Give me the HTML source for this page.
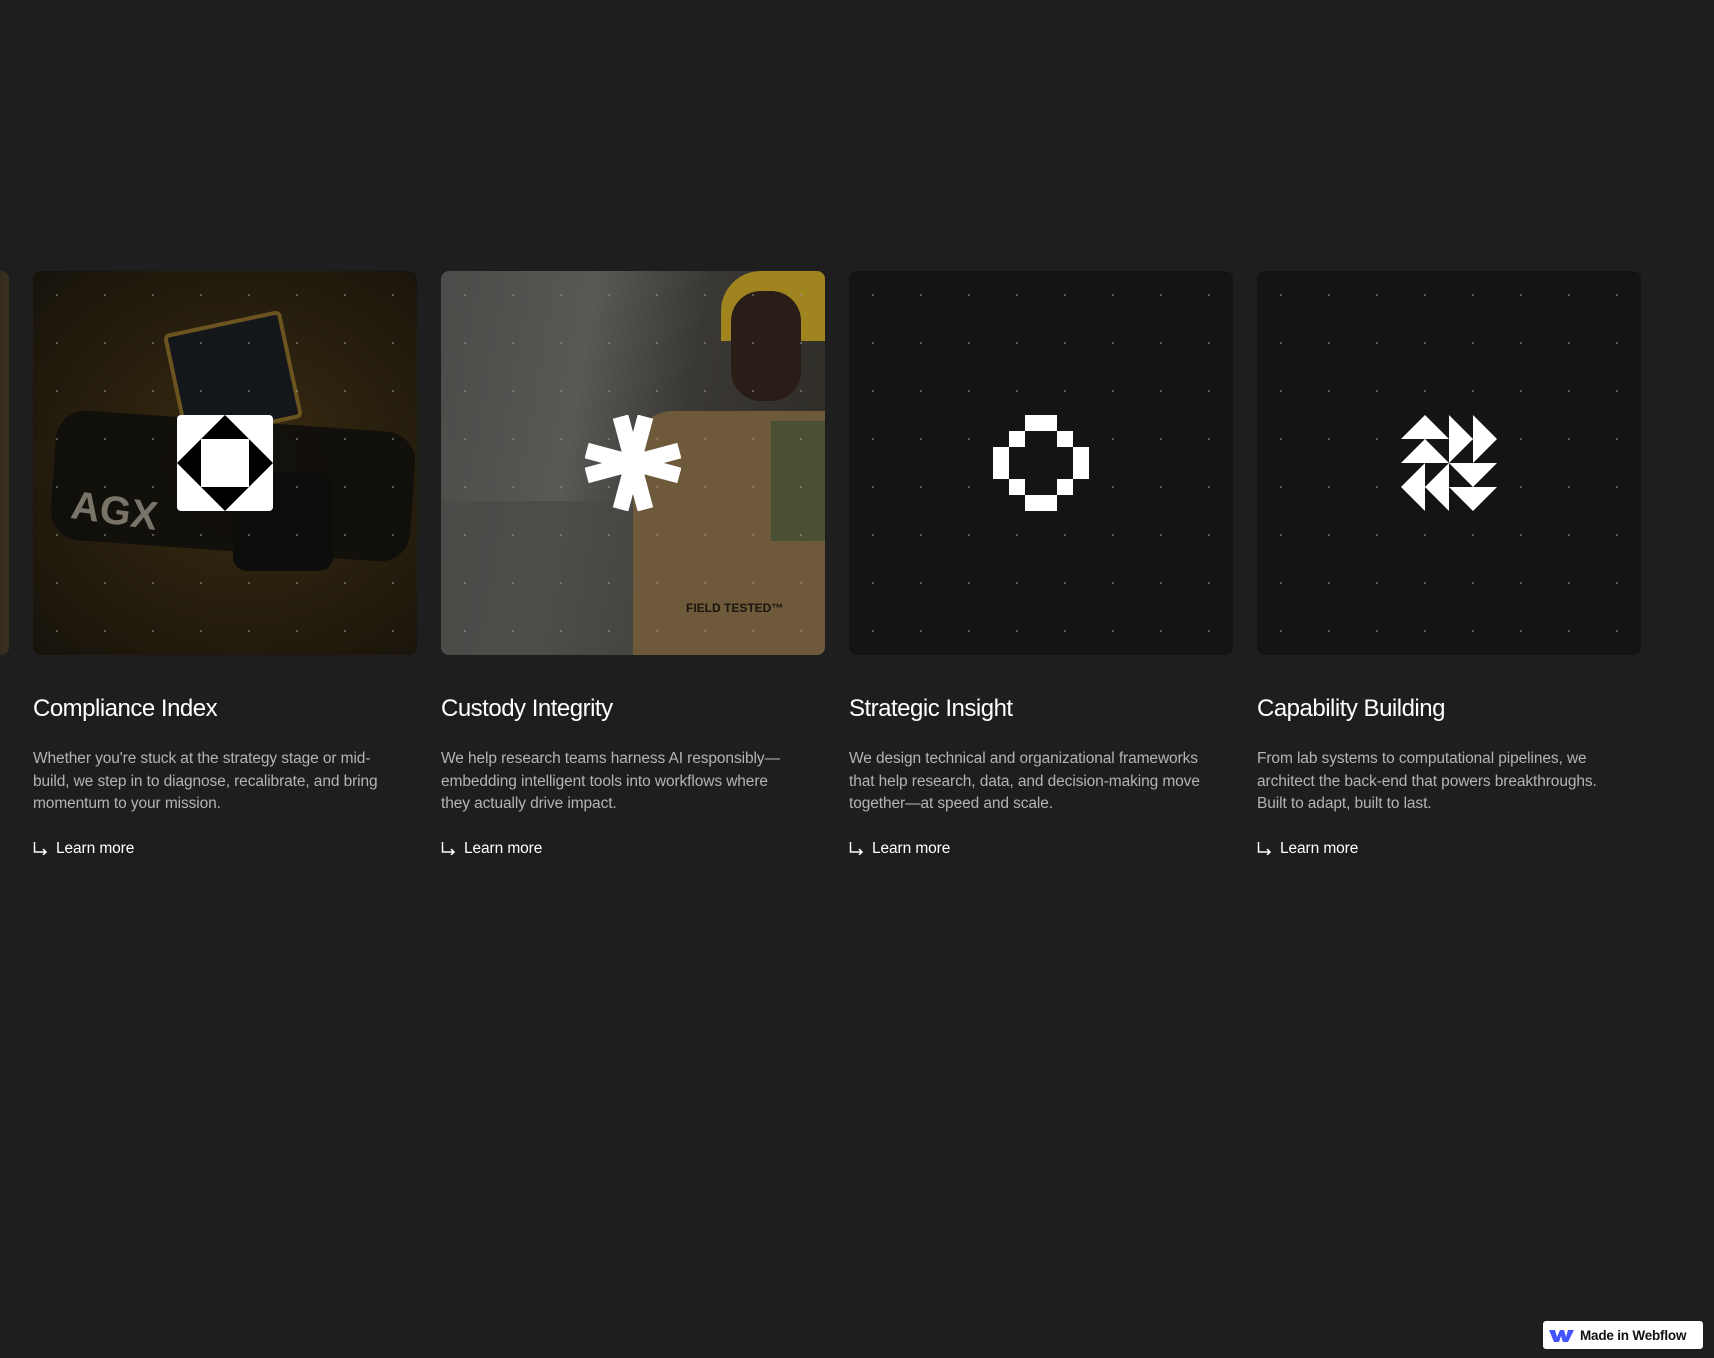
<!DOCTYPE html>
<html><head><meta charset="utf-8"><style>
*{margin:0;padding:0;box-sizing:border-box}
html,body{width:1714px;height:1358px;background:#1e1e1e;overflow:hidden;font-family:"Liberation Sans",sans-serif;color:#fff}
.card{position:absolute;top:271px;width:384px}
.img{position:relative;width:384px;height:384px;border-radius:8px;overflow:hidden;background:#141414}
.dots{position:absolute;inset:0;background-image:radial-gradient(circle,rgba(150,150,150,.55) 1px,transparent 1.3px);background-size:48px 48px;background-position:0 0}
.icon{position:absolute;left:144px;top:144px;width:96px;height:96px}
h3{margin-top:39px;font-weight:400;font-size:24px;letter-spacing:-0.5px;line-height:30px}
p{margin-top:24px;font-size:15.5px;line-height:22.5px;color:#b4b4b4;letter-spacing:-0.1px;white-space:nowrap}
.lm{margin-top:24px;font-size:15.5px;display:flex;align-items:center;gap:8px;letter-spacing:-0.1px}
</style></head><body>
<div style="position:absolute;left:-20px;top:271px;width:29px;height:384px;border-radius:8px;background:linear-gradient(90deg,#2a2418,#3a3020)"></div>

<div class="card" style="left:33px">
 <div class="img" style="background:radial-gradient(ellipse at 55% 50%,#3c2d12 0%,#2a200e 45%,#17130b 100%)">
  <div style="position:absolute;left:20px;top:150px;width:360px;height:130px;background:#0f0e0b;border-radius:30px;transform:rotate(4deg);opacity:.9"></div>
  <div style="position:absolute;left:140px;top:50px;width:120px;height:110px;background:#14171a;border:4px solid #6b5420;border-radius:6px;transform:rotate(-12deg)"></div>
  <div style="position:absolute;left:200px;top:200px;width:100px;height:100px;background:#0d0d0c;border-radius:14px"></div>
  <div style="position:absolute;left:38px;top:218px;color:#7a7468;font-size:40px;font-weight:700;transform:rotate(8deg)">AGX</div>
  <div class="dots"></div>
  <svg class="icon" viewBox="0 0 96 96"><rect width="96" height="96" rx="4" fill="#fff"/><polygon points="48,0 96,48 48,96 0,48" fill="#000"/><rect x="24" y="24" width="48" height="48" fill="#fff"/></svg>
 </div>
 <h3>Compliance Index</h3>
 <p>Whether you're stuck at the strategy stage or mid-<br>build, we step in to diagnose, recalibrate, and bring<br>momentum to your mission.</p>
 <div class="lm"><svg width="15" height="13" viewBox="0 0 15 13"><path d="M1.5 0V10H13M10 7L13 10L10 13" fill="none" stroke="#fff" stroke-width="1.5"/></svg>Learn more</div>
</div>

<div class="card" style="left:441px">
 <div class="img" style="background:linear-gradient(100deg,#4b4b49 0%,#5a5855 35%,#3a3835 60%,#2e2b24 100%)">
  <div style="position:absolute;left:0;top:230px;width:250px;height:154px;background:#4a4846;opacity:.7"></div>
  <div style="position:absolute;left:280px;top:0;width:104px;height:70px;background:#a08420;border-radius:40px 0 0 0"></div>
  <div style="position:absolute;left:290px;top:20px;width:70px;height:110px;background:#2a1d17;border-radius:30px"></div>
  <div style="position:absolute;left:192px;top:140px;width:192px;height:244px;background:#6e5a3a;border-radius:40px 0 0 0"></div>
  <div style="position:absolute;left:330px;top:150px;width:54px;height:120px;background:#4a5034"></div>
  <div style="position:absolute;left:245px;top:330px;color:#1a1510;font-size:12px;font-weight:700">FIELD TESTED™</div>
  <div class="dots"></div>
  <svg class="icon" viewBox="0 0 96 96"><g fill="#fff" transform="translate(48 48)"><rect x="-8" y="-48" width="16" height="96" transform="rotate(15)"/><rect x="-8" y="-48" width="16" height="96" transform="rotate(-15)"/><rect x="-8" y="-48" width="16" height="96" transform="rotate(75)"/><rect x="-8" y="-48" width="16" height="96" transform="rotate(105)"/></g></svg>
 </div>
 <h3>Custody Integrity</h3>
 <p>We help research teams harness AI responsibly—<br>embedding intelligent tools into workflows where<br>they actually drive impact.</p>
 <div class="lm"><svg width="15" height="13" viewBox="0 0 15 13"><path d="M1.5 0V10H13M10 7L13 10L10 13" fill="none" stroke="#fff" stroke-width="1.5"/></svg>Learn more</div>
</div>

<div class="card" style="left:849px">
 <div class="img"><div class="dots"></div>
  <svg class="icon" viewBox="0 0 96 96" shape-rendering="crispEdges"><g fill="#fff"><rect x="32" y="0" width="32" height="16"/><rect x="16" y="16" width="16" height="16"/><rect x="64" y="16" width="16" height="16"/><rect x="0" y="32" width="16" height="32"/><rect x="80" y="32" width="16" height="32"/><rect x="16" y="64" width="16" height="16"/><rect x="64" y="64" width="16" height="16"/><rect x="32" y="80" width="32" height="16"/></g></svg>
 </div>
 <h3>Strategic Insight</h3>
 <p>We design technical and organizational frameworks<br>that help research, data, and decision-making move<br>together—at speed and scale.</p>
 <div class="lm"><svg width="15" height="13" viewBox="0 0 15 13"><path d="M1.5 0V10H13M10 7L13 10L10 13" fill="none" stroke="#fff" stroke-width="1.5"/></svg>Learn more</div>
</div>

<div class="card" style="left:1257px">
 <div class="img"><div class="dots"></div>
  <svg class="icon" viewBox="0 0 96 96"><g fill="#fff"><polygon points="0,24 24,0 48,24"/><polygon points="0,48 24,24 48,48"/><polygon points="48,0 72,24 48,48"/><polygon points="72,0 96,24 72,48"/><polygon points="0,72 24,48 24,96"/><polygon points="24,72 48,48 48,96"/><polygon points="48,48 96,48 72,72"/><polygon points="48,72 96,72 72,96"/></g></svg>
 </div>
 <h3>Capability Building</h3>
 <p>From lab systems to computational pipelines, we<br>architect the back-end that powers breakthroughs.<br>Built to adapt, built to last.</p>
 <div class="lm"><svg width="15" height="13" viewBox="0 0 15 13"><path d="M1.5 0V10H13M10 7L13 10L10 13" fill="none" stroke="#fff" stroke-width="1.5"/></svg>Learn more</div>
</div>

<div style="position:absolute;left:1543px;top:1321px;width:160px;height:28px;background:#fff;border-radius:3px;display:flex;align-items:center;gap:6px;padding-left:6px;color:#111;font-size:13.5px;font-weight:700;letter-spacing:-0.2px">
 <svg width="25" height="15" viewBox="0 0 25 15"><path d="M0 2H6L8 9L11 2H15L17 9L19 2H25L19 14H14L12 8L10 14H5Z" fill="#4353ff"/></svg>Made in Webflow
</div>
</body></html>
